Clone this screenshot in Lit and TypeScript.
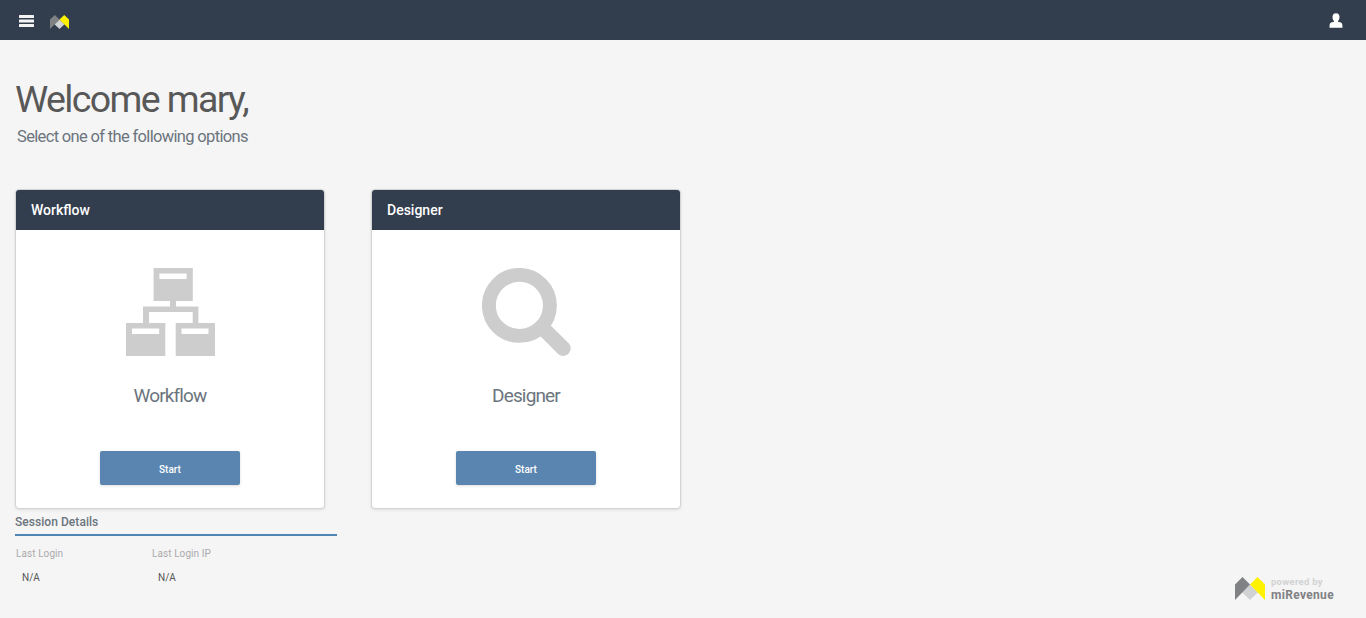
import { LitElement, html, svg, css } from "lit";
import { customElement, property } from "lit/decorators.js";

const logo = html`<svg viewBox="0 0 30 23" preserveAspectRatio="none" width="100%" height="100%">
  <path fill="#d1d2d4" d="M15 7.5 23 15.2 15 23 7 15.2z" />
  <path fill="#808184" d="M0 7.5 7.5 0 15 7.5 0 23z" />
  <path fill="#fff200" d="M15 7.5 22.5 0 30 7.5V23z" />
</svg>`;

const sitemap = svg`
  <path fill-rule="evenodd" d="M27.6 0h39.2v33H50v5.6h22.400V55h16.600v33H49.700V55h17V44H23v11h16.300v33H0V55h17V38.600h27V33H27.600zM33.400 5.500v5.500h27.200V5.500zM6 60.500V66h27.200v-5.500zM55.500 60.500V66h27v-5.500z" />`;

const magnifier = svg`
  <circle cx="37.400" cy="37.400" r="30.500" fill="none" stroke="#cdcdcd" stroke-width="13.900" />
  <path d="M58 67.800 68.700 57.500 86.700 75.300a7.500 7.500 0 0 1-10.600 10.600z" />`;

@customElement("option-card")
export class OptionCard extends LitElement {
  @property() label = "";
  @property() icon = "";

  static styles = css`
    :host {
      box-sizing: border-box;
      width: 310px;
      height: 320px;
      display: flex;
      flex-direction: column;
      align-items: center;
      background: #fff;
      border: 1px solid #d2d3d5;
      border-radius: 4px;
      box-shadow: 0 1px 3px rgba(0, 0, 0, 0.1);
    }
    .head {
      box-sizing: border-box;
      align-self: stretch;
      height: 40px;
      padding-left: 15px;
      border-radius: 3px 3px 0 0;
      background: #323d4d;
      color: #fff;
      font-size: 14px;
      font-weight: 500;
      line-height: 40px;
    }
    .icon {
      display: block;
      margin-top: 38px;
      fill: #cdcdcd;
    }
    .name {
      margin-top: 27px;
      height: 26px;
      line-height: 26px;
      font-size: 19px;
      letter-spacing: -0.850px;
      color: #6b747d;
    }
    button {
      margin: 42px 0 0;
      width: 140px;
      height: 34px;
      padding: 2px 0 0;
      border: 0;
      border-radius: 2px;
      background: #5985b0;
      box-shadow: 0 1px 3px rgba(0, 0, 0, 0.14);
      color: #fff;
      font: 500 10px Roboto, sans-serif;
    }
  `;

  render() {
    return html`
      <div class="head">${this.label}</div>
      <svg class="icon" width="89" height="88" viewBox="0 0 89 88">
        ${this.icon === "sitemap" ? sitemap : magnifier}
      </svg>
      <div class="name">${this.label}</div>
      <button>Start</button>
    `;
  }
}

@customElement("app-root")
export class AppRoot extends LitElement {
  static styles = css`
    :host {
      box-sizing: border-box;
      height: 618px;
      display: flex;
      flex-direction: column;
      background: #f5f5f5;
      font-family: Roboto, sans-serif;
      overflow: hidden;
    }
    .bar {
      height: 40px;
      flex: none;
      display: flex;
      align-items: flex-start;
      background: #323d4d;
    }
    .menu {
      margin: 15px 0 0 19px;
    }
    .brand {
      width: 19px;
      height: 14px;
      margin: 15px 0 0 16px;
      display: flex;
    }
    .user {
      margin: 13px 23px 0 auto;
    }
    h1 {
      margin: 34px 0 0 15px;
      height: 50px;
      line-height: 50px;
      font-size: 37.500px;
      font-weight: 400;
      letter-spacing: -1.640px;
      color: #585858;
    }
    .lead {
      margin: 1px 0 0 17px;
      height: 24px;
      line-height: 24px;
      font-size: 16.500px;
      letter-spacing: -0.660px;
      color: #6b747d;
    }
    .cards {
      display: flex;
      gap: 46px;
      margin: 40px 0 0 15px;
    }
    .foot {
      display: flex;
      justify-content: space-between;
      padding: 0 32px 0 15px;
    }
    .session {
      width: 322px;
    }
    .title {
      box-sizing: border-box;
      height: 27px;
      padding-top: 1px;
      line-height: 25px;
      border-bottom: 2px solid #5085b5;
      font-size: 12px;
      font-weight: 500;
      letter-spacing: 0.050px;
      color: #6b747d;
    }
    .details {
      display: grid;
      grid-template-columns: 136px 1fr;
      font-size: 10px;
      line-height: 24px;
      padding: 6px 0 0 1px;
    }
    .key {
      letter-spacing: 0.080px;
      color: #aaa;
    }
    .value {
      padding-left: 6px;
      color: #555;
    }
    .powered {
      display: flex;
      gap: 6px;
      margin-top: 68px;
    }
    .mark {
      display: flex;
      width: 30px;
      height: 23px;
    }
    .words {
      width: 63px;
      white-space: nowrap;
      font-weight: 700;
      font-size: 9.500px;
      letter-spacing: 0.280px;
      line-height: 10px;
      color: #d1d2d4;
    }
    .company {
      font-size: 12px;
      letter-spacing: 0.320px;
      line-height: 16px;
      color: #808184;
    }
  `;

  render() {
    return html`
      <header class="bar">
        <svg class="menu" width="15" height="12" viewBox="0 0 15 12" fill="#f4f4f4">
          <rect width="15" height="3" rx="0.5" />
          <rect y="4.500" width="15" height="3" rx="0.5" />
          <rect y="9" width="15" height="3" rx="0.5" />
        </svg>
        <div class="brand">${logo}</div>
        <svg class="user" width="14" height="15" viewBox="0 0 14 15" fill="#fff">
          <path d="M7 .2C9.400.2 10.500 1.700 10.500 4c0 1.800-.6 3.200-1.500 4.100v.7l2.800.8c1.300.5 1.700 1.800 1.700 5.200H.5c0-3.400.4-4.700 1.700-5.200L5 8.800v-.7C4.100 7.200 3.500 5.800 3.500 4 3.500 1.700 4.600.2 7 .2z" />
        </svg>
      </header>
      <h1>Welcome mary,</h1>
      <div class="lead">Select one of the following options</div>
      <main class="cards">
        <option-card label="Workflow" icon="sitemap"></option-card>
        <option-card label="Designer" icon="magnifier"></option-card>
      </main>
      <footer class="foot">
        <section class="session">
          <div class="title">Session Details</div>
          <div class="details">
            <span class="key">Last Login</span>
            <span class="key">Last Login IP</span>
            <span class="value">N/A</span>
            <span class="value">N/A</span>
          </div>
        </section>
        <div class="powered">
          <div class="mark">${logo}</div>
          <div class="words">
            <div>powered by</div>
            <div class="company">miRevenue</div>
          </div>
        </div>
      </footer>
    `;
  }
}
